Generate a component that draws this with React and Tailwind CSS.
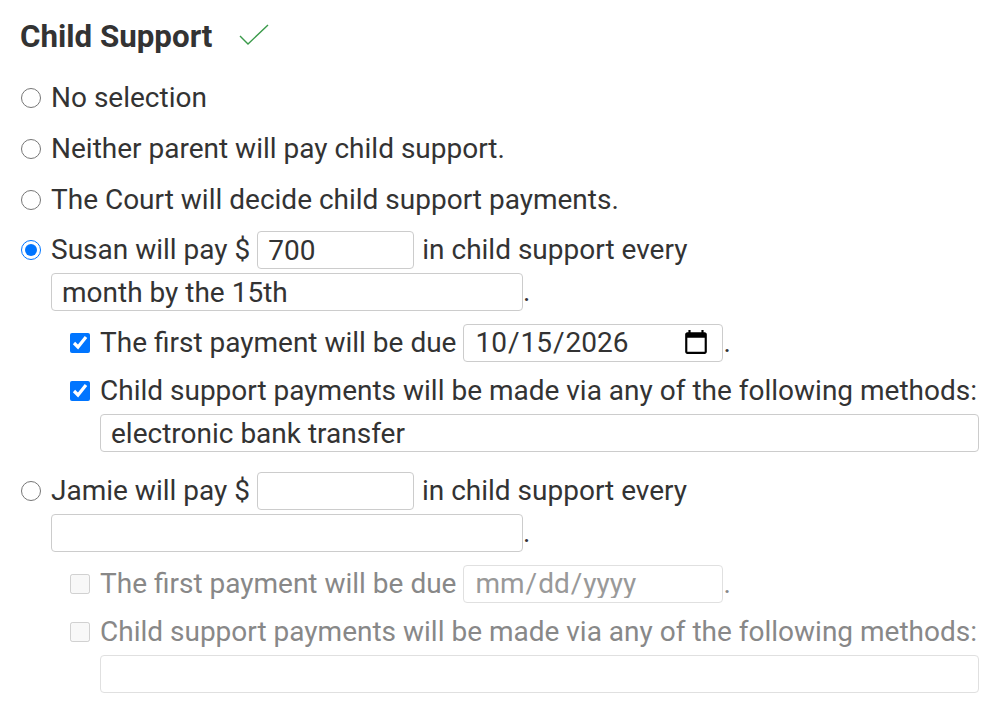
import React from 'react';

const inputCls =
  'h-[38px] rounded-[4px] border border-[#cccccc] bg-white px-[10px] text-[28px] leading-none text-[#333] outline-none disabled:border-[#e0e0e0] disabled:text-[#999]';

const Radio = ({ checked }) => (
  <input type="radio" name="cs" defaultChecked={checked} className="ml-px mr-[10px] h-5 w-5 shrink-0" />
);

const Check = ({ checked, disabled }) => (
  <input type="checkbox" defaultChecked={checked} disabled={disabled} className="mr-[10px] h-5 w-5 shrink-0" />
);

const PayBlock = ({ name, amount, every, date, methods, checked, disabled }) => (
  <div>
    <div className="flex h-[38px] items-center">
      <Radio checked={checked} />
      <span>{name} will pay $</span>
      <input defaultValue={amount} className={`${inputCls} ml-[7px] mr-[8px] w-[157px]`} />
      <span>in child support every</span>
    </div>
    <div className="mt-[4px] flex h-[38px] items-center pl-[31px]">
      <input defaultValue={every} className={`${inputCls} w-[472px]`} />
      <span>.</span>
    </div>
    <div className={`pl-[50px] ${disabled ? 'text-[#888]' : ''}`}>
      <div className="mt-[13px] flex h-[38px] items-center">
        <Check checked={checked} disabled={disabled} />
        <span>The first payment will be due</span>
        <input
          type="date"
          defaultValue={date}
          disabled={disabled}
          className={`${inputCls} ml-[7px] w-[260px]`}
        />
        <span>.</span>
      </div>
      <div className="mt-[14px] flex h-[30px] items-center">
        <Check checked={checked} disabled={disabled} />
        <span>Child support payments will be made via any of the following methods:</span>
      </div>
      <div className="mt-[8px] flex pl-[30px]">
        <input defaultValue={methods} disabled={disabled} className={`${inputCls} block w-full`} />
      </div>
    </div>
  </div>
);

export default function App() {
  return (
    <div
      className="min-h-[712px] bg-white pl-5 pr-[21px] pt-[17px] text-[28px] text-[#333]"
      style={{ fontFamily: 'Roboto, "Liberation Sans", sans-serif' }}
    >
      <div className="flex h-10 items-center">
        <h2 className="text-[31.3px] font-bold text-[#333]">Child Support</h2>
        <svg width="32" height="24" viewBox="0 0 32 24" className="ml-[26px] -mt-1">
          <polyline points="2,13 10,21 30,2" fill="none" stroke="#3a9a4a" strokeWidth="1.4" />
        </svg>
      </div>
      <div className="mt-[15px]">
        <div className="flex h-[51px] items-center">
          <Radio />
          <span>No selection</span>
        </div>
        <div className="flex h-[51px] items-center">
          <Radio />
          <span>Neither parent will pay child support.</span>
        </div>
        <div className="flex h-[51px] items-center">
          <Radio />
          <span>The Court will decide child support payments.</span>
        </div>
        <div className="pt-[6px]">
          <PayBlock
            name="Susan"
            amount="700"
            every="month by the 15th"
            date="2026-10-15"
            methods="electronic bank transfer"
            checked
          />
        </div>
        <div className="mt-[20px]">
          <PayBlock name="Jamie" amount="" every="" date="" methods="" disabled />
        </div>
      </div>
    </div>
  );
}
